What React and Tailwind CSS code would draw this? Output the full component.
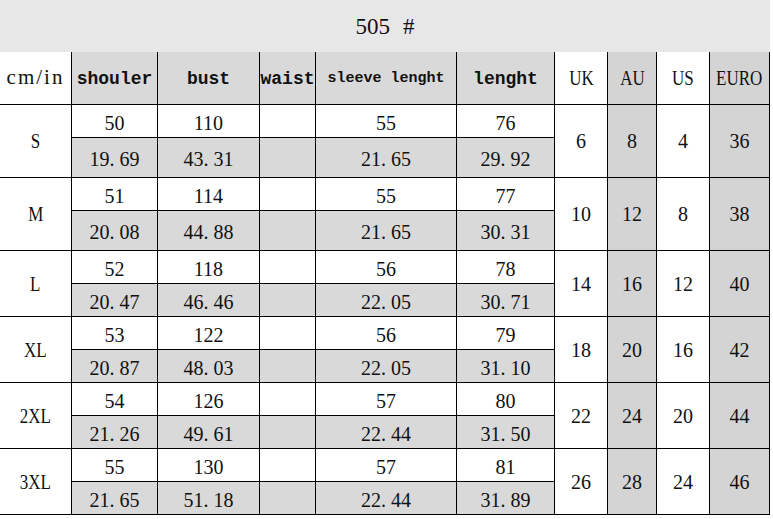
const rows = [
  { size: 'S', cm: ['50', '110', '', '55', '76'], inch: ['19.69', '43.31', '', '21.65', '29.92'], uk: '6', au: '8', us: '4', euro: '36' },
  { size: 'M', cm: ['51', '114', '', '55', '77'], inch: ['20.08', '44.88', '', '21.65', '30.31'], uk: '10', au: '12', us: '8', euro: '38' },
  { size: 'L', cm: ['52', '118', '', '56', '78'], inch: ['20.47', '46.46', '', '22.05', '30.71'], uk: '14', au: '16', us: '12', euro: '40' },
  { size: 'XL', cm: ['53', '122', '', '56', '79'], inch: ['20.87', '48.03', '', '22.05', '31.10'], uk: '18', au: '20', us: '16', euro: '42' },
  { size: '2XL', cm: ['54', '126', '', '57', '80'], inch: ['21.26', '49.61', '', '22.44', '31.50'], uk: '22', au: '24', us: '20', euro: '44' },
  { size: '3XL', cm: ['55', '130', '', '57', '81'], inch: ['21.65', '51.18', '', '22.44', '31.89'], uk: '26', au: '28', us: '24', euro: '46' },
];

const serif = "font-['Liberation_Serif',serif] text-[#111] text-[20px]";
const mono = "font-['Liberation_Mono',monospace] font-bold text-[#111] whitespace-nowrap";

// SimSun-style number: the dot takes a half-width cell
function Num({ v }) {
  if (!v.includes('.')) return <span>{v}</span>;
  const [a, b] = v.split('.');
  return (
    <span>
      {a}
      <span className="inline-block w-[10px] text-left">.</span>
      {b}
    </span>
  );
}

function Cell({ children, bg = 'bg-white', span, className = '' }) {
  return (
    <div className={`flex items-center justify-center ${bg} ${span ? 'row-span-2' : ''} ${className}`}>
      {children}
    </div>
  );
}

function Narrow({ children }) {
  return <span className="inline-block scale-x-85">{children}</span>;
}

export default function App() {
  const gray = 'bg-[#d9d9d9]';
  const dark = 'bg-[#d4d4d4]';

  return (
    <div className="w-[773px] h-[519px] bg-white overflow-hidden">
      <div className="w-[770px] h-[52px] bg-[#e7e7e7] flex items-center justify-center pt-[2px] font-['Liberation_Serif',serif] text-[23px] text-[#111]">
        <span>505</span>
        <span className="ml-[13px]">#</span>
      </div>

      <div className="w-[770px] grid grid-cols-[71px_85px_101px_55px_140px_97px_52px_48px_52px_59px] grid-rows-[52px_32px_39px_32px_39px_32px_32px_32px_32px_32px_32px_32px_32px] gap-px bg-black pr-px pb-px">
        <Cell className="font-['Liberation_Serif',serif] text-[#111] text-[21px] tracking-[2px]">cm/in</Cell>
        <Cell bg={gray} className={`${mono} text-[18px] pt-[3px]`}>shouler</Cell>
        <Cell bg={gray} className={`${mono} text-[18px] pt-[3px]`}>bust</Cell>
        <Cell bg={gray} className={`${mono} text-[18px] pt-[3px]`}>waist</Cell>
        <Cell bg={gray} className={`${mono} text-[15px] pt-[3px]`}>sleeve lenght</Cell>
        <Cell bg={gray} className={`${mono} text-[18px] pt-[3px]`}>lenght</Cell>
        <Cell className={serif}><Narrow>UK</Narrow></Cell>
        <Cell bg={dark} className={serif}><Narrow>AU</Narrow></Cell>
        <Cell className={serif}><Narrow>US</Narrow></Cell>
        <Cell bg={dark} className={serif}><Narrow>EURO</Narrow></Cell>

        {rows.map((r) => [
          <Cell key={r.size + 's'} span className={serif}>
            <Narrow>{r.size}</Narrow>
          </Cell>,
          ...r.cm.map((v, i) => (
            <Cell key={r.size + 'c' + i} className={`${serif} pt-[3px]`}>
              <Num v={v} />
            </Cell>
          )),
          <Cell key={r.size + 'uk'} span className={serif}>{r.uk}</Cell>,
          <Cell key={r.size + 'au'} span bg={dark} className={serif}>{r.au}</Cell>,
          <Cell key={r.size + 'us'} span className={serif}>{r.us}</Cell>,
          <Cell key={r.size + 'eu'} span bg={dark} className={serif}>{r.euro}</Cell>,
          ...r.inch.map((v, i) => (
            <Cell key={r.size + 'i' + i} bg={gray} className={`${serif} pt-[3px]`}>
              <Num v={v} />
            </Cell>
          )),
        ])}
      </div>
    </div>
  );
}
